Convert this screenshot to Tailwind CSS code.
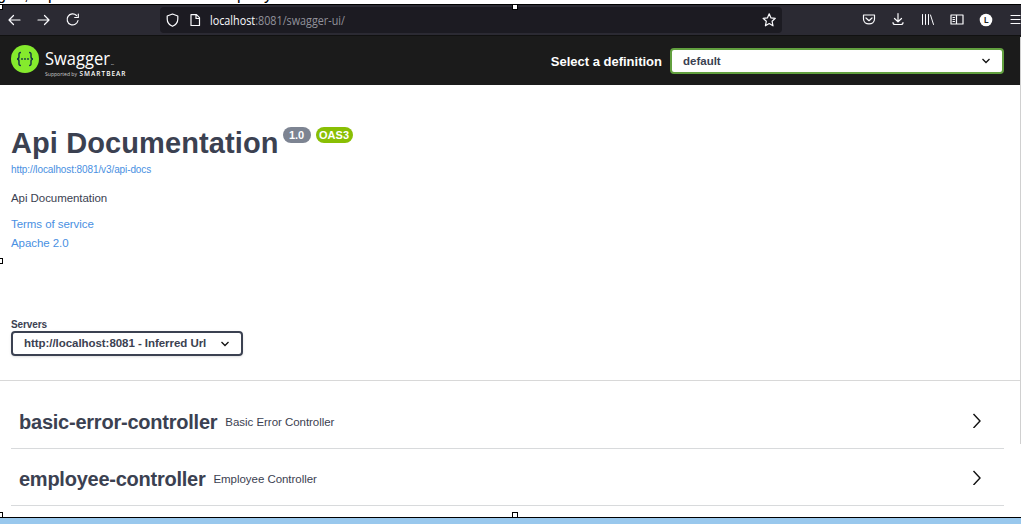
<!DOCTYPE html>
<html lang="en"><head><meta charset="utf-8"><title>Swagger UI</title>
<script src="https://cdn.jsdelivr.net/npm/@tailwindcss/browser@4"></script></head>
<body class="w-[1021px] h-[524px] overflow-hidden bg-white relative font-['Liberation_Sans',sans-serif] text-[#3b4151]">
<div class="h-[524px] flex flex-col">
<div class="h-1 shrink-0 overflow-hidden flex items-end text-[16px] leading-[18px] text-black whitespace-nowrap"><span class="-ml-[3px] w-[27px] shrink-0">g</span><span class="w-[24px] shrink-0">,</span><span class="w-[189px] shrink-0">p</span><span class="w-[27px] shrink-0">p</span><span>y</span></div>
<nav class="h-8 shrink-0 bg-[#2b2a33] border-t border-black border-b border-b-[#111] flex items-center relative text-[#fbfbfe]">
<svg class="w-[160px] h-8 shrink-0" fill="none" stroke="currentColor" stroke-width="1.2" stroke-linecap="round" stroke-linejoin="round"><path d="M9 16H20M13.500 11.500L9 16L13.500 20.500M38 16H49M44.500 11.500L49 16L44.500 20.500M76.500 11.500A5.500 5.500 0 1 0 78 16.500M78.300 10V13.500H74.700"/></svg>
<div class="w-[622px] h-[26px] bg-[#1c1b22] rounded flex items-center shrink-0">
<svg class="w-[50px] h-[26px] shrink-0" fill="none" stroke="currentColor" stroke-width="1.2" stroke-linejoin="round"><path d="M12.500 7L17.800 9V12C17.800 15.500 15.500 18 12.500 19.300C9.500 18 7.200 15.500 7.200 12V9ZM31 7.700H36.500L39.500 10.700V18.500H31ZM36 8V11.500H39.500"/></svg>
<svg class="w-[140px] h-[26px] shrink-0"><text x="0" y="17.500" fill="#92929b" font-family="Open Sans" font-size="12" textLength="135" lengthAdjust="spacingAndGlyphs"><tspan fill="#fbfbfe">localhost</tspan>:8081/swagger-ui/</text></svg>
<svg class="w-[26px] h-[26px] ml-auto shrink-0" fill="none" stroke="currentColor" stroke-width="1.200" stroke-linejoin="round"><path d="M13.200 6.800L15 10.900L19.300 11.300L16.100 14.300L17 18.800L13.200 16.500L9.400 18.800L10.300 14.300L7.100 11.300L11.400 10.900Z"/></svg></div>
<svg class="w-[239px] h-8 shrink-0" fill="none" stroke="currentColor" stroke-width="1.200" stroke-linecap="round" stroke-linejoin="round"><path d="M81.500 11H92.500V15C92.500 21.500 81.500 21.500 81.500 15ZM84 14L87 16.700L90 14M116 9.500V17.500M112.500 14.500L116 17.800L119.500 14.500M111 18.500C111 20 111.500 20.500 113 20.500H119C120.500 20.500 121 20 121 18.500M169 11H181V20H169ZM174.500 11V20M171 13.500H172.500M171 15.500H172.500M171 17.500H172.500M229 11.500H238M229 15.500H238M229 19.500H238"/><path stroke-width="1" d="M140.500 10.500V20.500M143.500 10.500V20.500M146.500 10.500V20.500M148.500 11L151.500 20.500"/><circle cx="204" cy="16" r="6.300" fill="#fff" stroke="none"/><text x="201.700" y="19.300" fill="#222" stroke="none" font-family="Noto Sans" font-size="9" font-weight="600">L</text></svg>
</nav>
<header class="h-[49px] shrink-0 bg-[#1b1b1b] flex items-center pl-[11px] pr-[17px] text-white">
<svg class="w-[120px] h-[49px] shrink-0"><circle cx="14" cy="23" r="14" fill="#85ea2d"/><g fill="none" stroke="#173647" stroke-width="1.500"><path d="M10 16.500C7.500 16.500 8 18 8 20.500C8 22 7.500 23 6 23C7.500 23 8 24 8 25.500C8 28 7.500 29.500 10 29.500M18 16.500C20.500 16.500 20 18 20 20.500C20 22 20.500 23 22 23C20.500 23 20 24 20 25.500C20 28 20.500 29.500 18 29.500"/></g><g fill="#173647"><circle cx="11" cy="23" r=".9"/><circle cx="14" cy="23" r=".9"/><circle cx="17" cy="23" r=".9"/></g><g fill="#fff"><text x="34" y="29" font-family="Open Sans" font-size="18.500" textLength="65" lengthAdjust="spacingAndGlyphs">Swagger</text><text x="100" y="28.500" font-family="Open Sans" font-size="2">TM</text><text x="34" y="40" fill="#ccc" font-family="Open Sans" font-size="5.500" textLength="32" lengthAdjust="spacingAndGlyphs">Supported by</text><text x="68.500" y="40" font-family="Open Sans" font-weight="600" font-size="6.500" textLength="46">SMARTBEAR</text></g></svg>
<span class="ml-auto mr-2 mt-0.5 text-[13px] font-bold">Select a definition</span>
<div class="w-[334px] h-[26px] bg-white border-2 border-[#62a03f] rounded flex items-center pl-[11px] pr-[11px] text-[11.500px] font-bold text-[#3b4151]"><span class="pt-0.5">default</span><svg class="w-2.5 h-2 ml-auto" fill="none" stroke="#111" stroke-width="1.300"><path d="M1.500 2L5 5.500L8.500 2"/></svg></div>
</header>
<main class="h-[432px] shrink-0 overflow-hidden">
<section class="pl-[11px] h-[296px] border-b border-[#d8d8d8] flex flex-col items-start">
<div class="flex mt-[40px] h-[36px] items-start"><h1 class="text-[29px] leading-9 font-bold whitespace-nowrap tracking-[0.1px]">Api Documentation</h1><span class="ml-[4px] mt-[2px] w-[28px] h-4 rounded-full bg-[#7d8492] text-white text-[11px] leading-4 font-bold text-center">1.0</span><span class="ml-[5px] mt-[2px] w-[37px] h-4 rounded-full bg-[#89bf04] text-white text-[11px] leading-4 font-bold text-center">OAS3</span></div>
<a class="text-[10px] leading-3 mt-[2px] pt-px text-[#4990e2] tracking-[-0.1px]">http://localhost:8081/v3/api-docs</a>
<p class="text-[11.500px] leading-4 mt-[14px] tracking-[-0.06px]">Api Documentation</p>
<a class="text-[11.500px] leading-4 mt-[10px] text-[#4990e2] tracking-[-0.06px]">Terms of service</a>
<a class="text-[11.500px] leading-4 mt-[3px] text-[#4990e2] tracking-[-0.06px]">Apache 2.0</a>
<label class="text-[10px] leading-3 font-bold mt-[68px] tracking-[-0.1px]">Servers</label>
<div class="w-[232px] h-[25px] border-2 border-[#3b4151] rounded shadow-sm flex items-center pl-[11px] pr-[11px] text-[11.500px] tracking-[-0.05px] font-bold"><span>http://localhost:8081 - Inferred Url</span><svg class="w-2.5 h-2 ml-auto" fill="none" stroke="#111" stroke-width="1.300"><path d="M1.500 2L5 5.500L8.500 2"/></svg></div>
</section>
<section class="pl-[11px] pr-[17px] pt-[11px]">
<div class="h-[57px] border-b border-[#d8dadc] flex items-center pl-2 pr-[22px] pt-1"><h2 class="pb-px text-[20px] tracking-[-0.23px] font-bold">basic-error-controller</h2><span class="ml-2 pt-0.5 text-[11.500px] tracking-[-0.04px]">Basic Error Controller</span><svg class="w-[10px] h-4 ml-auto mb-1" fill="none" stroke="#111" stroke-width="1.400"><path d="M1.500 2L8 9L1.500 16"/></svg></div>
<div class="h-[57px] border-b border-[#d8dadc] flex items-center pl-2 pr-[22px] pt-1"><h2 class="pb-px text-[20px] tracking-[-0.25px] font-bold">employee-controller</h2><span class="ml-2 pt-0.5 text-[11.500px] tracking-[-0.04px]">Employee Controller</span><svg class="w-[10px] h-4 ml-auto mb-1" fill="none" stroke="#111" stroke-width="1.400"><path d="M1.500 2L8 9L1.500 16"/></svg></div>
</section></main>
<footer class="h-[7px] shrink-0 bg-[#99c8ed] border-t border-black"></footer>
</div>
<i class="absolute left-[-3px] top-1 size-1.5 bg-white border border-black"></i><i class="absolute left-[512px] top-1 size-1.5 bg-white border border-black"></i>
<i class="absolute left-[-3px] top-[258px] size-1.5 bg-white border border-black"></i>
<i class="absolute left-[-3px] top-[512px] size-1.5 bg-white border border-black"></i><i class="absolute left-[512px] top-[512px] size-1.5 bg-white border border-black"></i>
<i class="absolute right-0 top-[37px] w-px h-[407px] bg-[#d0d0d0]"></i>
</body></html>
